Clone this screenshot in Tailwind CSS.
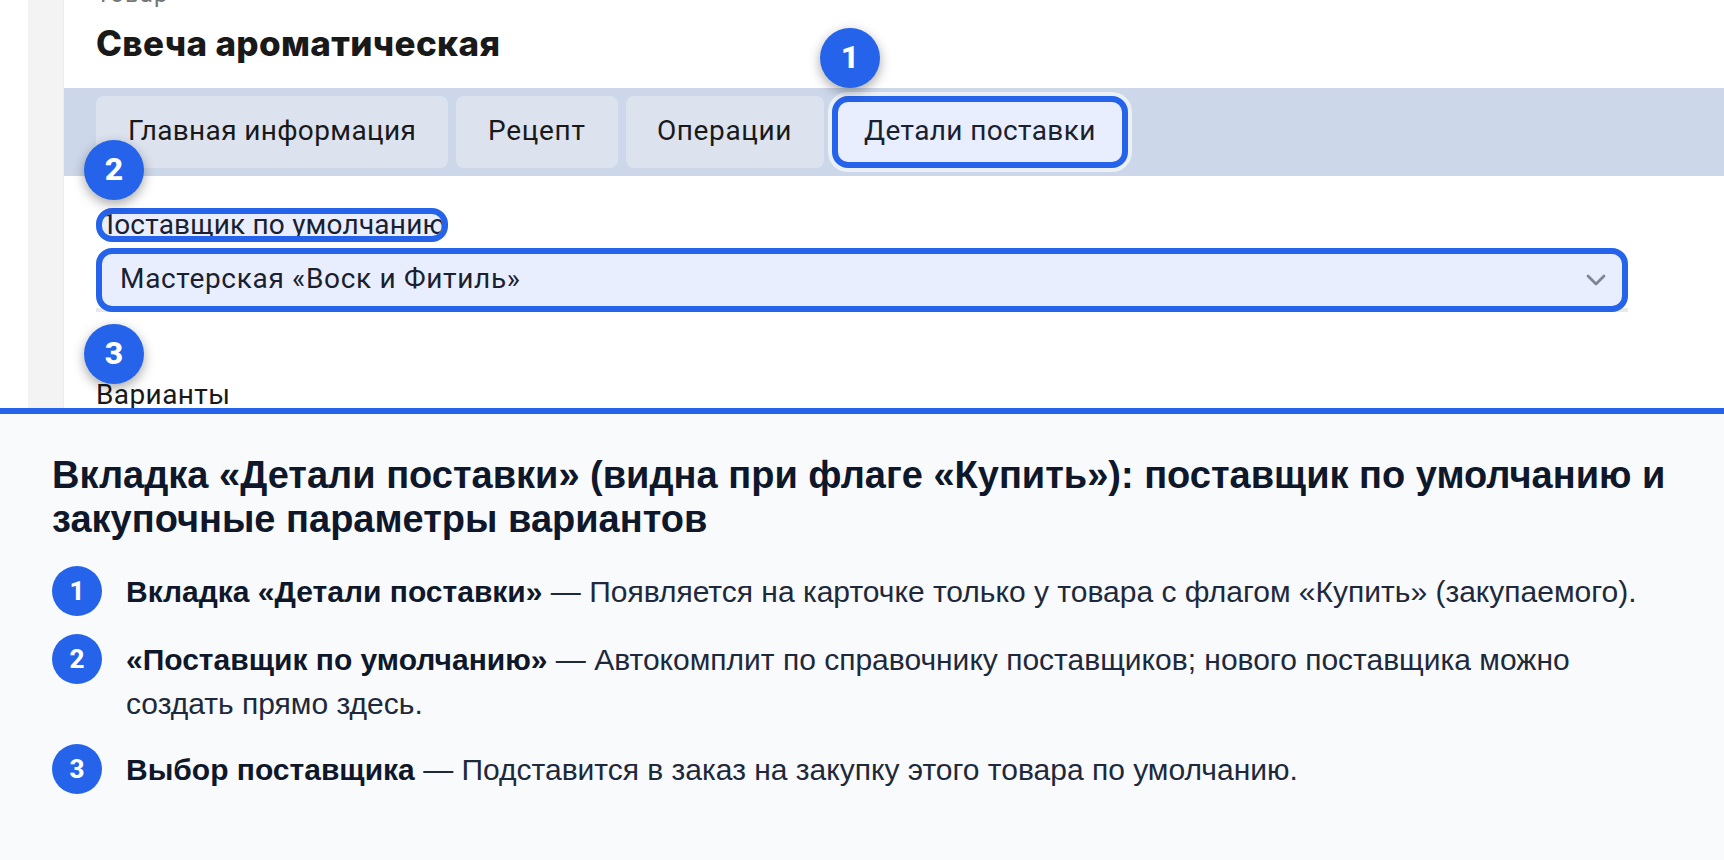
<!DOCTYPE html>
<html lang="ru">
<head>
    <meta charset="UTF-8">
    <meta name="viewport" content="width=device-width, initial-scale=1.0">
    <title>Детали поставки</title>
    <script src="https://cdn.jsdelivr.net/npm/@tailwindcss/browser@4"></script>
</head>
<body class="bg-white overflow-hidden">
    <div class="h-[860px] flex flex-col overflow-hidden">
        <!-- Product card -->
        <section class="h-[408px] shrink-0 flex overflow-hidden pl-7 font-['Roboto',sans-serif] text-[28px] text-[#191919]">
            <div class="w-9 shrink-0 bg-[#f3f3f3] border-r border-[#ececec]"></div>
            <main class="flex-1">
                <div class="h-[88px] pl-8 overflow-hidden">
                    <p class="-mt-5 h-7 leading-7 text-2xl tracking-[1.1px] text-[#757575]">Товар</p>
                    <h1 class="mt-[14px] leading-[42px] text-[35px] font-['Inter',sans-serif] font-extrabold tracking-[0.34px]">Свеча ароматическая</h1>
                </div>

                <!-- Tabs -->
                <nav class="h-[88px] bg-[#ccd7e9] px-8 py-2 flex gap-2 leading-[70px] whitespace-nowrap">
                    <div class="w-[352px] pl-8 rounded-lg bg-[#dce3ef] tracking-[0.35px]">Главная информация</div>
                    <div class="w-[162px] pl-8 rounded-lg bg-[#dce3ef] tracking-[0.7px]">Рецепт</div>
                    <div class="w-[198px] pl-[31px] rounded-lg bg-[#dce3ef] tracking-[0.6px]">Операции</div>
                    <div class="relative w-[296px] rounded-2xl border-6 border-[#2563eb] bg-[#e8eefd] pl-[26px] leading-[58px] tracking-[0.38px] text-[#1a2030] ring-4 ring-white/60">
                        Детали поставки
                        <span class="absolute -left-[18px] -top-[74px] size-[60px] rounded-full bg-[#2563eb] text-center leading-[58px] tracking-normal text-[32px] font-extrabold text-white shadow-[0_4px_12px_rgba(0,0,0,0.35)]">1</span>
                    </div>
                </nav>

                <!-- Supplier -->
                <div class="pl-8 pt-8">
                    <div class="relative w-[352px] h-[34px]">
                        <div class="w-full h-full rounded-2xl border-6 border-[#2563eb] bg-[#e8eefd] overflow-hidden whitespace-nowrap text-[#1a2030]">
                            <div class="-ml-[8px] -mt-[6px] leading-[34px] tracking-[0.2px]">Поставщик по умолчанию</div>
                        </div>
                        <span class="absolute -left-3 -top-[68px] size-[60px] rounded-full bg-[#2563eb] text-center leading-[58px] text-[32px] font-extrabold text-white shadow-[0_4px_12px_rgba(0,0,0,0.35)]">2</span>
                    </div>
                    <div class="relative mt-[6px] w-[1532px] h-16 bg-[linear-gradient(#fff_60px,#e8e8e8_60px)]">
                        <div class="h-full rounded-2xl border-6 border-[#2563eb] bg-[#e8eefd] pl-[18px] pr-[14px] flex items-center justify-between text-[#1a2030]">
                            <span class="-mt-[2px] tracking-[0.68px]">Мастерская «Воск и Фитиль»</span>
                            <svg class="w-6 h-6" viewBox="0 0 24 24" fill="none" stroke="#7f8594" stroke-width="2.8" stroke-linecap="round" stroke-linejoin="round"><path d="M4 8l8 8 8-8"/></svg>
                        </div>
                        <span class="absolute -left-3 top-[76px] size-[60px] rounded-full bg-[#2563eb] text-center leading-[58px] text-[32px] font-extrabold text-white shadow-[0_4px_12px_rgba(0,0,0,0.35)]">3</span>
                    </div>
                    <p class="mt-[66px] leading-[34px] tracking-[0.4px]">Варианты</p>
                </div>
            </main>
        </section>

        <!-- Legend -->
        <section class="flex-1 border-t-6 border-[#2563eb] bg-[#f8fafc] px-[52px] pt-[39px] font-['Liberation_Sans',sans-serif] text-[#1e293b]">
            <h2 class="text-[38px] leading-[44px] font-bold text-[#0f172a]">Вкладка «Детали поставки» (видна при флаге «Купить»): поставщик по умолчанию и закупочные параметры вариантов</h2>
            <ol class="mt-[25px] flex flex-col gap-[18px] text-[30px] leading-[44px]">
                <li class="flex items-start gap-6">
                    <span class="size-[50px] shrink-0 rounded-full bg-[#2563eb] text-center font-['Roboto',sans-serif] text-[26px] leading-[50px] font-extrabold text-white">1</span>
                    <p class="pt-1"><b class="text-[#0f172a]">Вкладка «Детали поставки»</b> — Появляется на карточке только у товара с флагом «Купить» (закупаемого).</p>
                </li>
                <li class="flex items-start gap-6">
                    <span class="size-[50px] shrink-0 rounded-full bg-[#2563eb] text-center font-['Roboto',sans-serif] text-[26px] leading-[50px] font-extrabold text-white">2</span>
                    <p class="pt-1"><b class="text-[#0f172a]">«Поставщик по умолчанию»</b> — Автокомплит по справочнику поставщиков; нового поставщика можно создать прямо здесь.</p>
                </li>
                <li class="flex items-start gap-6">
                    <span class="size-[50px] shrink-0 rounded-full bg-[#2563eb] text-center font-['Roboto',sans-serif] text-[26px] leading-[50px] font-extrabold text-white">3</span>
                    <p class="pt-1"><b class="text-[#0f172a]">Выбор поставщика</b> — Подставится в заказ на закупку этого товара по умолчанию.</p>
                </li>
            </ol>
        </section>
    </div>
</body>
</html>
